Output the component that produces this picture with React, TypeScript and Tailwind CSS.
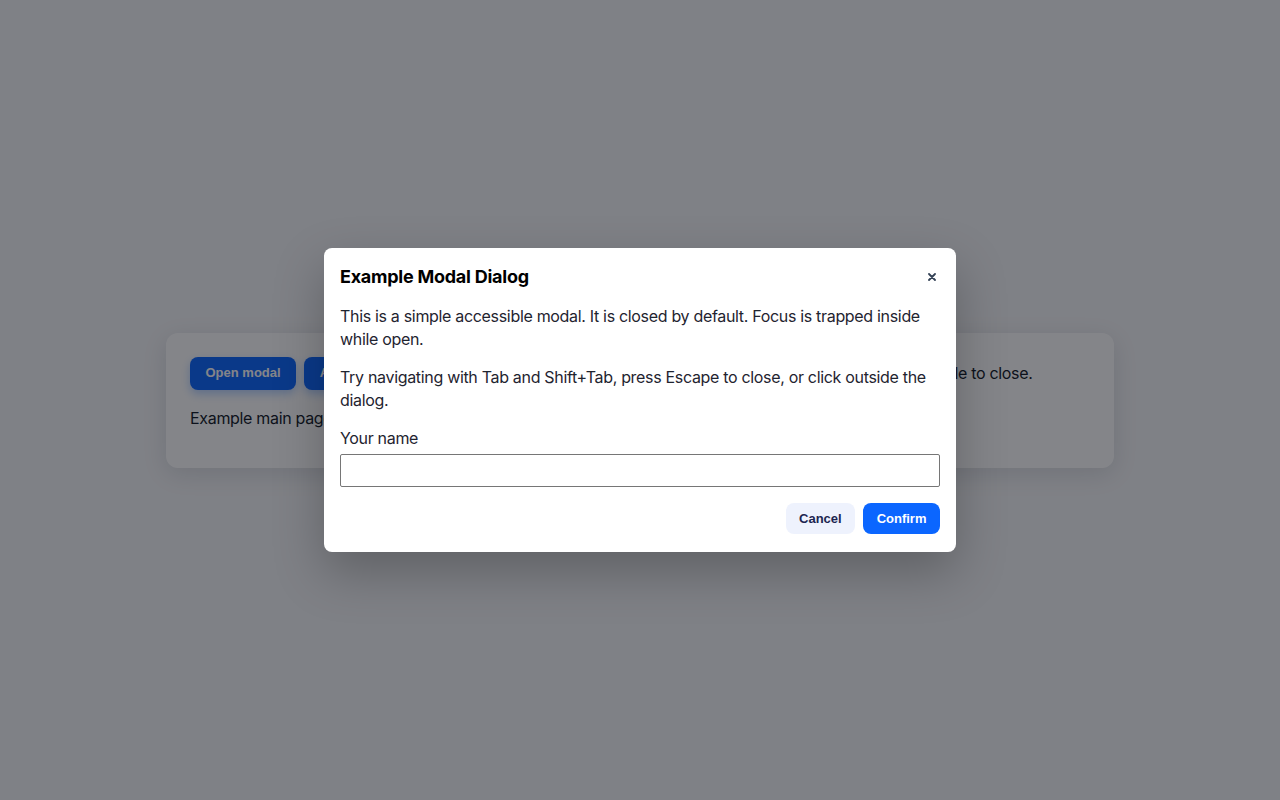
import React, { useState } from 'react';

const App: React.FC = () => {
  const [name, setName] = useState('');

  return (
    <div className="relative min-h-screen bg-[#f5f6f8] flex items-center justify-center font-['Inter',sans-serif] tracking-[-0.32px] text-[#111827]">
      {/* main page */}
      <div className="w-[948px] bg-white rounded-xl shadow-[0_6px_24px_rgba(15,23,42,0.12)] px-6 pt-6 pb-[38px]">
        <div className="flex items-center gap-2">
          <button className="h-[33px] px-[15.5px] rounded-lg bg-[#0b66ff] text-white text-[13px] font-bold tracking-normal font-['Liberation_Sans',sans-serif] shadow-[0_4px_10px_rgba(11,102,255,0.3)]">
            Open modal
          </button>
          <button className="h-[33px] px-[15.5px] rounded-lg bg-[#0b66ff] text-white text-[13px] font-bold tracking-normal font-['Liberation_Sans',sans-serif] shadow-[0_4px_10px_rgba(11,102,255,0.3)]">
            Another action
          </button>
          <span className="ml-[14px] text-base">
            Click the button to open the dialog. Press Escape, or use the × in its title to close.
          </span>
        </div>
        <p className="mt-4 text-base leading-6">Example main page content sits behind the modal overlay.</p>
      </div>

      {/* overlay */}
      <div className="absolute inset-0 bg-[rgba(10,12,20,0.5)] flex items-center justify-center">
        <div
          role="dialog"
          aria-modal="true"
          className="w-[632px] bg-white rounded-lg px-4 pt-4 pb-[18px] shadow-[0_20px_50px_rgba(0,0,0,0.25)]"
        >
          <div className="flex items-center justify-between h-[24px] mt-[1px]">
            <h2 className="text-lg font-bold text-black tracking-[-0.25px]">Example Modal Dialog</h2>
            <button aria-label="Close" className="w-4 h-4 flex items-center justify-center text-[#334155]">
              <svg width="8" height="8" viewBox="0 0 8 8" fill="none" stroke="currentColor" strokeWidth="1.8" strokeLinecap="round">
                <path d="M1 1l6 6M7 1L1 7" />
              </svg>
            </button>
          </div>
          <p className="mt-[16px] text-base leading-[23px] text-[#1f2430]">
            This is a simple accessible modal. It is closed by default. Focus is trapped inside while open.
          </p>
          <p className="mt-[15px] text-base leading-[23px] text-[#1f2430]">
            Try navigating with Tab and Shift+Tab, press Escape to close, or click outside the dialog.
          </p>
          <label className="block mt-[15px] text-base leading-[23px] text-[#1f2430]" htmlFor="your-name">
            Your name
          </label>
          <input
            id="your-name"
            value={name}
            onChange={(e) => setName(e.target.value)}
            className="block w-full h-[33px] mt-[4px] border border-[#767676] rounded-[2px] px-2 text-base outline-none"
          />
          <div className="flex justify-end gap-2 mt-4">
            <button className="h-[31px] px-[13.5px] rounded-lg bg-[#eef2fd] text-[#1c2550] text-[13px] font-bold tracking-normal font-['Liberation_Sans',sans-serif]">
              Cancel
            </button>
            <button className="h-[31px] px-[13.5px] rounded-lg bg-[#0b66ff] text-white text-[13px] font-bold tracking-normal font-['Liberation_Sans',sans-serif]">
              Confirm
            </button>
          </div>
        </div>
      </div>
    </div>
  );
};

export default App;
